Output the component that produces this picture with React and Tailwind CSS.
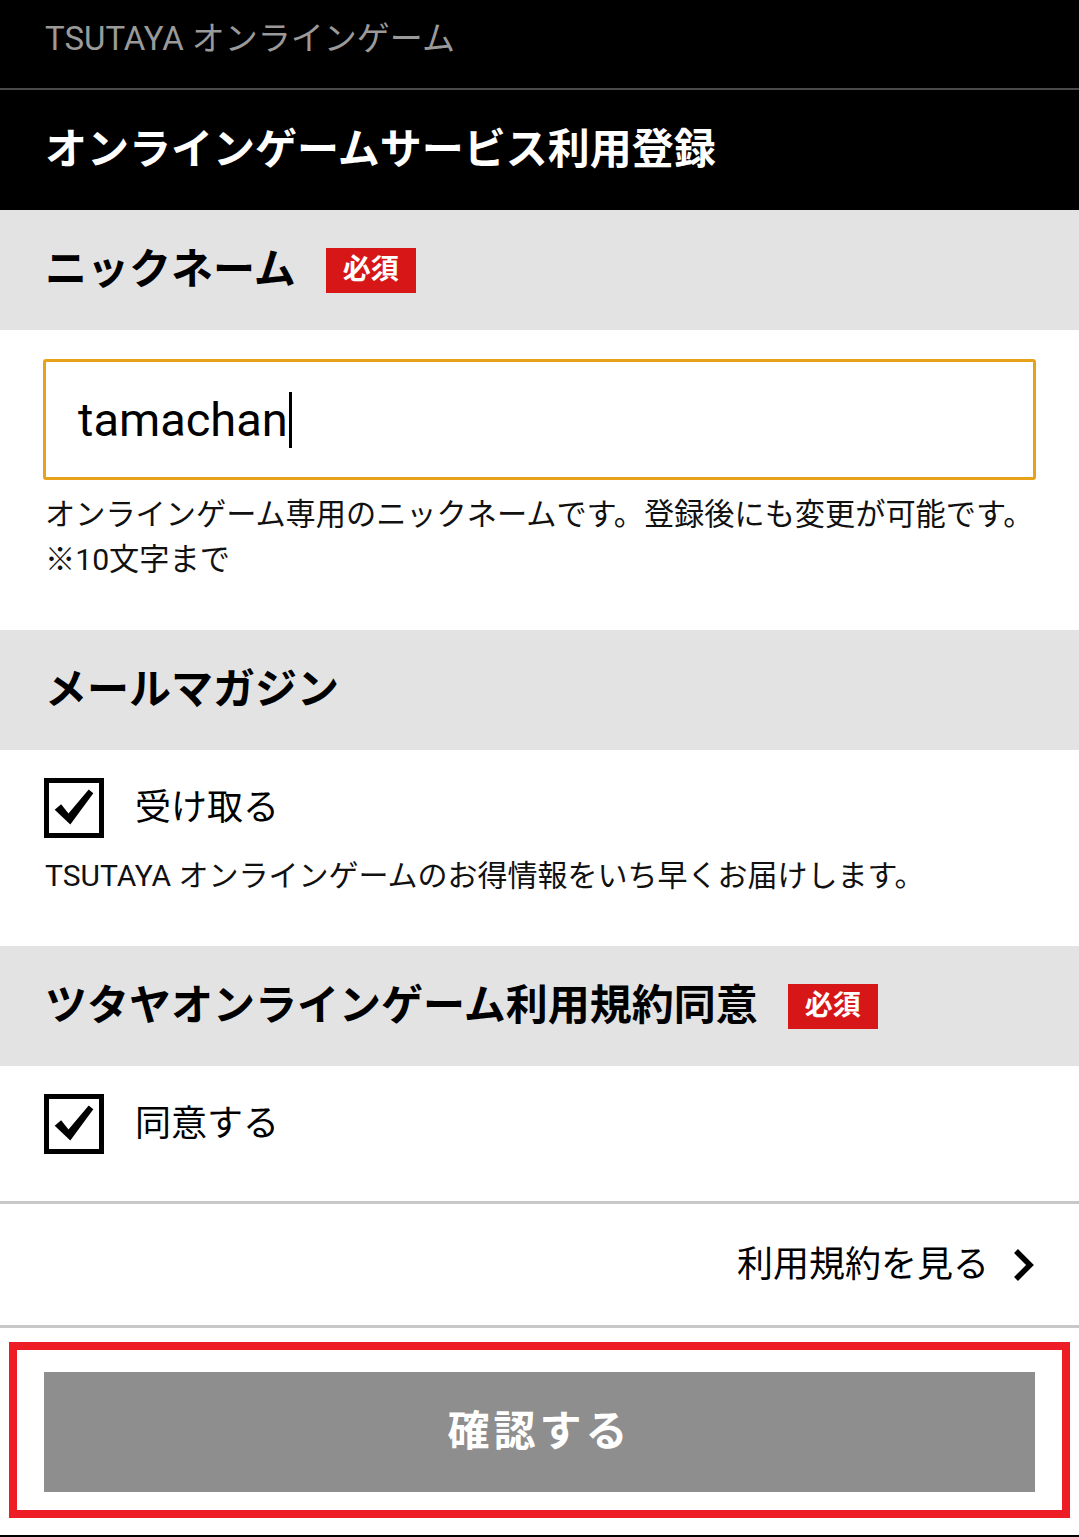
import React from "react";

const font = { fontFamily: 'Roboto, "Noto Sans CJK JP", sans-serif' };

const Badge = () => (
  <span className="ml-[30px] inline-flex h-[45px] w-[90px] items-center justify-center bg-[#d71618] text-[28px] font-bold text-white leading-none">
    必須
  </span>
);

const SectionHeader = ({ title, required }) => (
  <div className="flex h-[120px] items-center bg-[#e3e3e3] px-[45px]">
    <h2 className="text-[42px] font-bold leading-none text-black">{title}</h2>
    {required && <Badge />}
  </div>
);

const CheckBox = () => (
  <span className="flex h-[60px] w-[60px] shrink-0 items-center justify-center border-[5px] border-black bg-white">
    <svg viewBox="0 0 50 50" className="h-[46px] w-[46px]">
      <path d="M4 27 L11 21 L19 31 L41 5 L46 9 L21 43 Z" fill="black" />
    </svg>
  </span>
);

const App = () => {
  return (
    <div className="min-h-[1537px] w-full bg-white" style={font}>
      {/* top bar */}
      <div className="flex h-[88px] items-start bg-black px-[45px] pt-[22px]">
        <span className="text-[33px] text-[#9a9a9a] leading-none">TSUTAYA オンラインゲーム</span>
      </div>
      <div className="h-[2px] bg-[#4a4a4a]" />
      <div className="flex h-[120px] items-center bg-black px-[45px]">
        <h1 className="text-[42px] font-bold leading-none text-white">オンラインゲームサービス利用登録</h1>
      </div>

      {/* nickname */}
      <SectionHeader title="ニックネーム" required />
      <div className="px-[43px] pt-[29px] pb-[48px]">
        <div className="flex h-[121px] items-center rounded-[3px] border-[3px] border-[#e8a21a] pl-[32px]">
          <span className="text-[47px] leading-none text-black">tamachan</span>
          <span className="ml-[1px] h-[56px] w-[3px] bg-black" />
        </div>
        <p className="mt-[12px] pl-[2px] text-[30.2px] leading-[45px] text-[#111]">
          オンラインゲーム専用のニックネームです。登録後にも変更が可能です。
          <br />
          ※10文字まで
        </p>
      </div>

      {/* mail magazine */}
      <SectionHeader title="メールマガジン" />
      <div className="px-[44px] pt-[28px] pb-[50px]">
        <label className="flex items-center gap-[31px]">
          <CheckBox />
          <span className="text-[36px] leading-none text-black">受け取る</span>
        </label>
        <p className="mt-[18px] pl-[1px] text-[30px] leading-[40px] text-[#111]">
          TSUTAYA オンラインゲームのお得情報をいち早くお届けします。
        </p>
      </div>

      {/* terms */}
      <SectionHeader title="ツタヤオンラインゲーム利用規約同意" required />
      <div className="px-[44px] pt-[28px] pb-[47px]">
        <label className="flex items-center gap-[31px]">
          <CheckBox />
          <span className="text-[36px] leading-none text-black">同意する</span>
        </label>
      </div>
      <div className="h-[3px] bg-[#c8c8c8]" />
      <div className="flex h-[121px] items-center justify-end pr-[44px]">
        <span className="text-[36px] leading-none text-black">利用規約を見る</span>
        <svg viewBox="0 0 24 36" className="ml-[22px] h-[36px] w-[24px]">
          <path d="M5 4 L19 18 L5 32" fill="none" stroke="black" strokeWidth="5.5" />
        </svg>
      </div>
      <div className="h-[3px] bg-[#c8c8c8]" />

      {/* submit */}
      <div className="px-[9px] pt-[14px]">
        <div className="border-[8px] border-[#ee1c25] px-[27px] pt-[22px] pb-[18px]">
          <button className="flex h-[120px] w-full items-center justify-center bg-[#8e8e8e] text-[42px] font-bold tracking-[4px] text-white leading-none">
            確認する
          </button>
        </div>
      </div>
      <div className="mt-[17px] h-[3px] bg-black" />
    </div>
  );
};

export default App;
